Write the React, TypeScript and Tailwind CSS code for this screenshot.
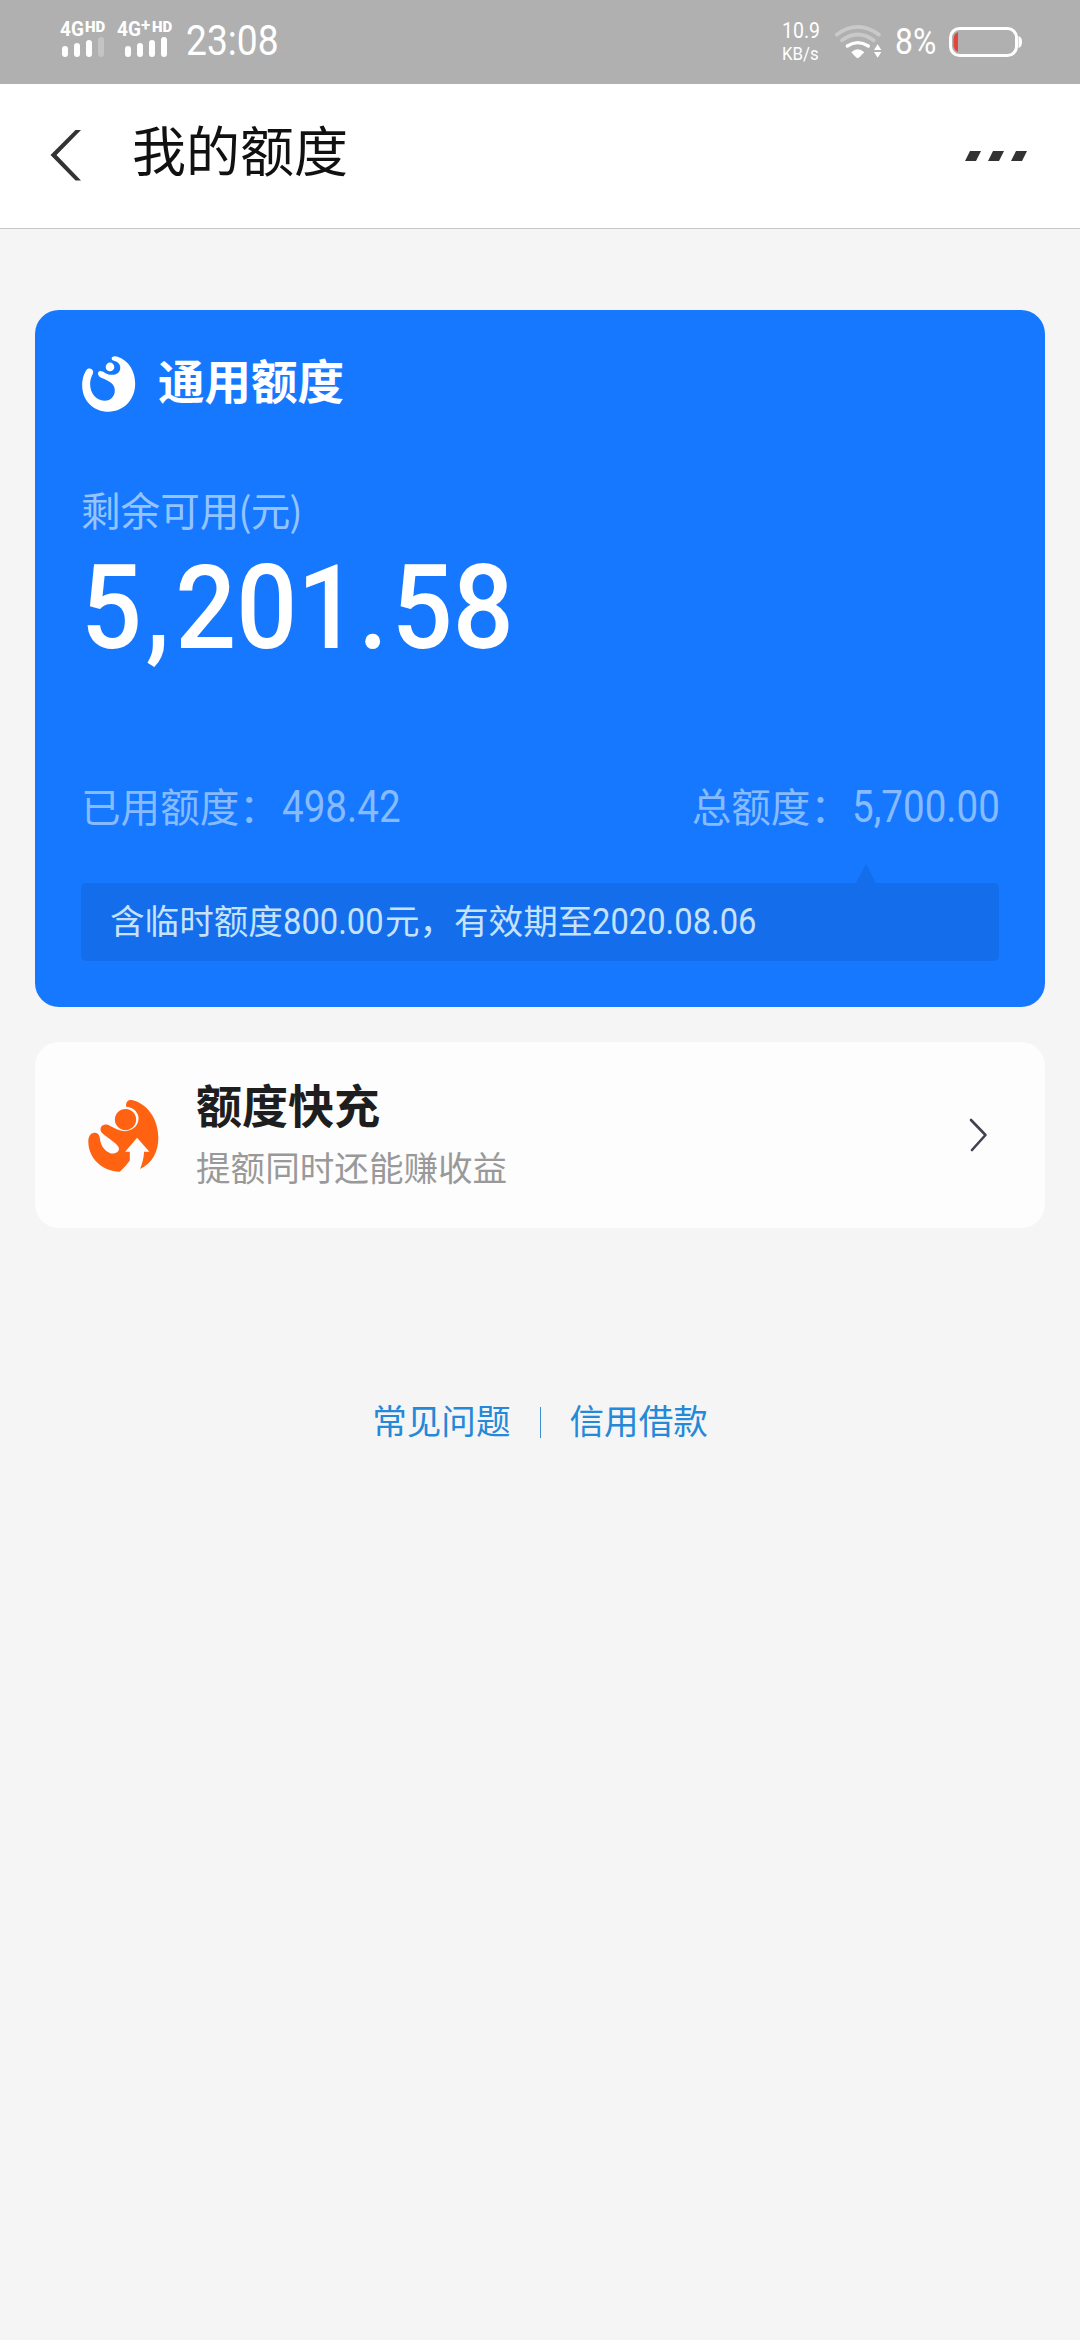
import type { ReactNode } from "react";

/** Horizontally condensed Latin text; the width class fixes the room it takes. */
function Narrow({ className, children }: { className: string; children: ReactNode }) {
  return (
    <span className={`inline-block whitespace-nowrap font-[Roboto,sans-serif] ${className}`}>
      <span className="inline-block origin-left scale-x-[0.885]">{children}</span>
    </span>
  );
}

function Signal({ label, plus, faded }: { label: string; plus?: boolean; faded?: boolean }) {
  return (
    <div className={`flex flex-col ${plus ? "w-[62px]" : "w-[57px]"}`}>
      <div className="flex h-4 items-start whitespace-nowrap font-[Roboto,sans-serif] font-bold">
        <span className={`flex h-4 items-center text-[20px] leading-4 ${plus ? "w-6" : "w-[25px]"}`}>
          <span className="origin-left scale-x-[0.95]">{label}</span>
        </span>
        {plus && <span className="w-[11px] text-[17px] leading-[9px]">+</span>}
        <span className="text-[15px] font-black leading-[13px]">HD</span>
      </div>
      <div className={`flex h-5 items-end gap-1.5 ${plus ? "pl-2" : "pl-0.5"}`}>
        <i className="h-[11px] w-1.5 rounded-sm bg-white" />
        <i className="h-[14px] w-1.5 rounded-sm bg-white" />
        <i className="h-[17px] w-1.5 rounded-sm bg-white" />
        <i className={`h-5 w-1.5 rounded-sm ${faded ? "bg-white/25" : "bg-white"}`} />
      </div>
    </div>
  );
}

function StatusBar() {
  return (
    <div className="flex h-[84px] items-start bg-[#b0b0b0] text-white">
      <div className="ml-[60px] mt-[21px] flex">
        <Signal label="4G" faded />
        <Signal label="4G" plus />
      </div>
      <Narrow className="ml-[7px] mt-[17px] w-[96px] text-[42px] leading-[48px]">23:08</Narrow>
      <div className="ml-auto mr-[58px] flex">
        <div className="mt-[20px] flex w-[53px] flex-col">
          <Narrow className="text-[22px] leading-[22px]">10.9</Narrow>
          <Narrow className="text-[19px] leading-[24px]">KB/s</Narrow>
        </div>
        <svg className="mt-[24px] h-9 w-12" viewBox="222 72 144 108" fill="none">
          <path d="M227 104Q290 57 354 104" stroke="#c9c9c9" strokeWidth="11" strokeLinecap="round" />
          <path d="M243 121Q290 86 338 121" stroke="#c9c9c9" strokeWidth="11" strokeLinecap="round" />
          <path d="M259 138Q290 118 322 138" stroke="#fff" strokeWidth="10" strokeLinecap="round" />
          <path d="M271 157Q290 139 310 157L295 172Q290 177 285 172Z" fill="#fff" />
          <path d="M339 150L350 133L361 150ZM339 156L350 173L361 156Z" fill="#fff" />
        </svg>
        <Narrow className="ml-[12px] mt-[21px] w-[53px] text-[36px] leading-[42px]">8%</Narrow>
        <svg className="mt-[26px] h-8 w-[74px]" viewBox="0 0 74 32">
          <rect x="2.5" y="2.5" width="66" height="27" rx="9" fill="none" stroke="#fff" strokeWidth="3" />
          <path d="M10 6V26Q5.5 24 5.5 19V13Q5.5 8 10 6Z" fill="#e2453a" />
          <path d="M70.5 10Q74 11 74 16T70.5 22Z" fill="#fff" />
        </svg>
      </div>
    </div>
  );
}

function Header() {
  return (
    <header className="flex h-[145px] items-start border-b border-[#c8c8c8] bg-white">
      <svg className="ml-[50px] mt-[45px] h-[52px] w-8" viewBox="0 0 32 52">
        <path d="M25.5 1H31L6.5 26L31 51.5H25.5L0.5 26Z" fill="#333" />
      </svg>
      <h1 className="ml-[50px] mt-[29px] text-[54px] leading-[72px] text-[#111]">我的额度</h1>
      <svg className="ml-auto mr-[52px] mt-[67px] h-[10px] w-[63px]" viewBox="0 0 63 10">
        <path d="M5 0H16L11 10H0ZM28 0H39L34 10H23ZM51 0H62L57 10H46Z" fill="#333" />
      </svg>
    </header>
  );
}

function QuotaCard() {
  return (
    <section className="mx-[35px] mt-[81px] h-[697px] rounded-[24px] bg-[#1678ff] px-[46px] pt-[45px]">
      <div className="flex h-[60px] items-start">
        <svg className="h-[57px] w-[55px]" viewBox="180 165 165 172" fill="#fff">
          <path d="M273 172Q280 166 290 170C325 182 343 215 343 252C343 300 308 336 263 336C217 336 183 303 183 256C183 237 189 220 196 210C202 202 214 205 216 214C218 222 208 229 207 252C207 281 225 303 250 303C274 303 286 282 280 262C276 249 260 242 244 235C235 231 228 224 232 216C236 211 244 214 252 219C265 226 281 227 291 219C302 209 300 192 287 185C278 182 269 181 273 172Z" />
          <circle cx="267" cy="201" r="13" />
        </svg>
        <h2 className="ml-[22px] mt-[-3px] text-[46.5px] font-bold leading-[54px] text-white">通用额度</h2>
      </div>
      <div className="mt-[67px] h-[54px] text-[39.6px] leading-[54px] text-[#94c4ff]">
        剩余可<span className="tracking-[-1px]">用</span>
        <span className="tracking-[-1px]">(</span>
        <span className="tracking-[-1px]">元</span>)
      </div>
      <div className="mt-[16px] flex h-[112px] items-center whitespace-nowrap font-[Roboto,sans-serif] text-[116px] font-medium leading-[112px] text-white">
        <span className="origin-left scale-x-[0.925]">
          <span className="tracking-[4px]">5</span>
          <span className="tracking-[6px]">,</span>201<span className="tracking-[4px]">.</span>58
        </span>
      </div>
      <div className="mt-[111px] flex h-[60px] items-center justify-between text-[39.6px] leading-[60px] text-[#86bbff]">
        <div className="whitespace-nowrap">
          已用额度：<Narrow className="ml-[3px] w-[120px] text-[43.6px] leading-[50px]">498.42</Narrow>
        </div>
        <div className="whitespace-nowrap">
          总额度：<Narrow className="ml-[2px] w-[147px] text-[43.6px] leading-[50px]">5,700.00</Narrow>
        </div>
      </div>
      <div className="relative mt-[48px] flex h-[78px] w-[918px] items-center whitespace-nowrap rounded-[5px] bg-[#146eeb] pb-1.5 pl-[29px] text-[34.6px] leading-[50px] text-[#c5e2ff]">
        <svg className="absolute right-[123px] top-[-19px] h-[19px] w-5" viewBox="0 0 20 19">
          <path d="M10 0L20 19H0Z" fill="#146eeb" />
        </svg>
        <span>
          含临时额度<Narrow className="w-[102px] text-[37px] leading-[40px]">800.00</Narrow>元，有效期至
          <Narrow className="w-[166px] text-[37px] leading-[40px]">2020.08.06</Narrow>
        </span>
      </div>
    </section>
  );
}

function BoostCard() {
  return (
    <section className="mx-[35px] mt-[35px] flex h-[186px] items-start rounded-[24px] bg-[#fdfdfd]">
      <svg className="ml-[52px] mt-[55px] h-[77px] w-[73px]" viewBox="200 200 220 230" fill="#ff6210">
        <circle cx="316" cy="267" r="32" />
        <path d="M318 228C316 214 324 206 335 208C382 218 415 266 415 322C415 362 398 399 360 416C366 401 371 385 372 364H388L351 322L315 364H329V390Q316 409 299 424C246 423 204 384 204 334C204 318 211 307 222 307C234 307 238 315 239 325C241 343 251 362 272 369C288 371 298 364 296 352C292 339 265 326 244 306C236 294 244 281 258 282C272 283 286 301 315 302C344 300 358 279 355 258C351 240 337 230 318 228Z" />
      </svg>
      <div className="ml-[36px] mt-[31px]">
        <h3 className="text-[46px] font-bold leading-[60px] text-[#1e1e1e]">额度快充</h3>
        <p className="mt-[8px] text-[34.6px] leading-[50px] text-[#999]">提额同时还能赚收益</p>
      </div>
      <svg className="ml-auto mr-[57px] mt-[75px] h-9 w-5" viewBox="0 0 20 36" fill="none">
        <path d="M3 3L17.500 18L4 33" stroke="#42414f" strokeWidth="2.600" strokeLinecap="round" strokeLinejoin="round" />
      </svg>
    </section>
  );
}

export default function App() {
  return (
    <div className="min-h-[2340px] w-[1080px] bg-[#f5f5f5] font-['Noto_Sans_CJK_SC',sans-serif]">
      <StatusBar />
      <Header />
      <QuotaCard />
      <BoostCard />
      <nav className="mt-[164px] flex h-[54px] items-center justify-center text-[34.6px] leading-[54px] text-[#2389d8]">
        <a>常见问题</a>
        <span className="mx-[29px] mt-[6px] h-[31px] w-px bg-[#3b91cf]" />
        <a>信用借款</a>
      </nav>
    </div>
  );
}
